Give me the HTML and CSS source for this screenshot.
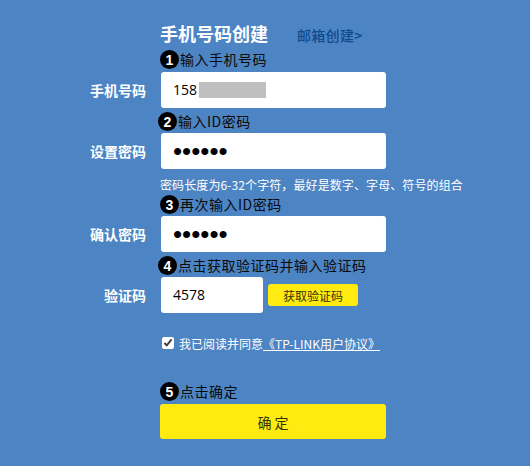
FILE: index.html
```html
<!DOCTYPE html>
<html lang="zh">
<head>
<meta charset="utf-8">
<title>手机号码创建</title>
<link rel="stylesheet" href="styles.css">
</head>
<body>
<main class="form">
  <header class="head">
    <h1 class="title">手机号码创建</h1>
    <a class="switch">邮箱创建&gt;</a>
  </header>

  <div class="step step-a tight"><span class="num">1</span><span>输入手机号码</span></div>
  <div class="row">
    <label class="label">手机号码</label>
    <div class="field"><span>158</span><span class="redact"></span></div>
  </div>

  <div class="step step-b gap"><span class="num">2</span><span>输入ID密码</span></div>
  <div class="row">
    <label class="label">设置密码</label>
    <div class="field dots">••••••</div>
  </div>
  <p class="hint">密码长度为6-32个字符，最好是数字、字母、符号的组合</p>

  <div class="step step-a"><span class="num">3</span><span>再次输入ID密码</span></div>
  <div class="row">
    <label class="label">确认密码</label>
    <div class="field dots">••••••</div>
  </div>

  <div class="step step-b gap"><span class="num">4</span><span>点击获取验证码并输入验证码</span></div>
  <div class="row">
    <label class="label">验证码</label>
    <div class="field short">4578</div>
    <button class="get">获取验证码</button>
  </div>

  <div class="agree">
    <input class="check" type="checkbox" checked>
    <span>我已阅读并同意<a class="link">《TP-LINK用户协议》</a></span>
  </div>

  <div class="step step-a tight last"><span class="num">5</span><span>点击确定</span></div>
  <button class="ok">确 定</button>
</main>
</body>
</html>
```
FILE: styles.css
```css
* { box-sizing: border-box; }
html, body { margin: 0; height: 466px; overflow: hidden; }
body {
  background: #4d84c4;
  font-family: "Noto Sans CJK SC", "Liberation Sans", sans-serif;
  color: #fff;
}
.form { padding: 18px 0 0 160px; width: 530px; }
.head { display: flex; align-items: center; height: 30px; }
.title { margin: 0; font-size: 18px; font-weight: 700; line-height: 30px; width: 137px; color: #fff; }
.switch { font-size: 14px; font-weight: 500; color: #0f4a8f; letter-spacing: 0.3px; padding-top: 4px; }
.step { display: flex; align-items: center; height: 22px; margin-bottom: 1px; font-size: 14px; color: #0a0a0a; letter-spacing: 0.5px; }
.tight { margin-bottom: 2px; }
.step-a { gap: 1px; }
.step-b { gap: 1px; margin-left: -2px; }
.num {
  width: 19px; height: 19px; border-radius: 50%;
  background: #000; color: #fff;
  font-family: "Liberation Sans", sans-serif;
  font-weight: 700; font-size: 14px; letter-spacing: 0;
  display: flex; align-items: center; justify-content: center;
  flex: none;
  margin-top: 1px;
}
.gap { margin-top: 2px; }
.row { display: flex; align-items: center; margin-left: -160px; height: 36px; }
.label { width: 146px; text-align: right; font-size: 14px; font-weight: 700; color: #fff; margin-right: 15px; }
.field {
  position: relative;
  width: 225px; height: 36px;
  background: #fff; border-radius: 3px;
  color: #000; font-family: "Open Sans", "Liberation Sans", sans-serif;
  font-size: 14px; line-height: 36px; padding-left: 12px;
}
.redact { position: absolute; left: 38px; top: 10px; width: 67px; height: 16px; background: #bfbfbf; }
.dots { font-family: "Liberation Sans", sans-serif; font-size: 26px; padding-left: 12px; line-height: 36px; }
.short { width: 102px; }
.get {
  margin: 0 0 0 5px; width: 90px; height: 22px; border: 0; border-radius: 3px;
  background: #ffeb0f; color: #33330a; font: 12px "Noto Sans CJK SC", sans-serif; padding: 0;
}
.hint { margin: 7px 0 0; height: 17px; font-size: 12px; line-height: 17px; letter-spacing: 0.1px; color: #fff; white-space: nowrap; }
.agree { display: flex; align-items: center; height: 20px; margin: 20px 0 0 2px; font-size: 12px; gap: 5px; }
.check { width: 12px; height: 12px; margin: 0; accent-color: #fff; }
.link { text-decoration: underline; }
.last { margin-top: 27px; }
.ok {
  display: block; width: 226px; height: 35px; border: 0; border-radius: 3px;
  background: #ffeb0f; color: #33330a; font: 14px "Noto Sans CJK SC", sans-serif; padding: 0;
}
```
